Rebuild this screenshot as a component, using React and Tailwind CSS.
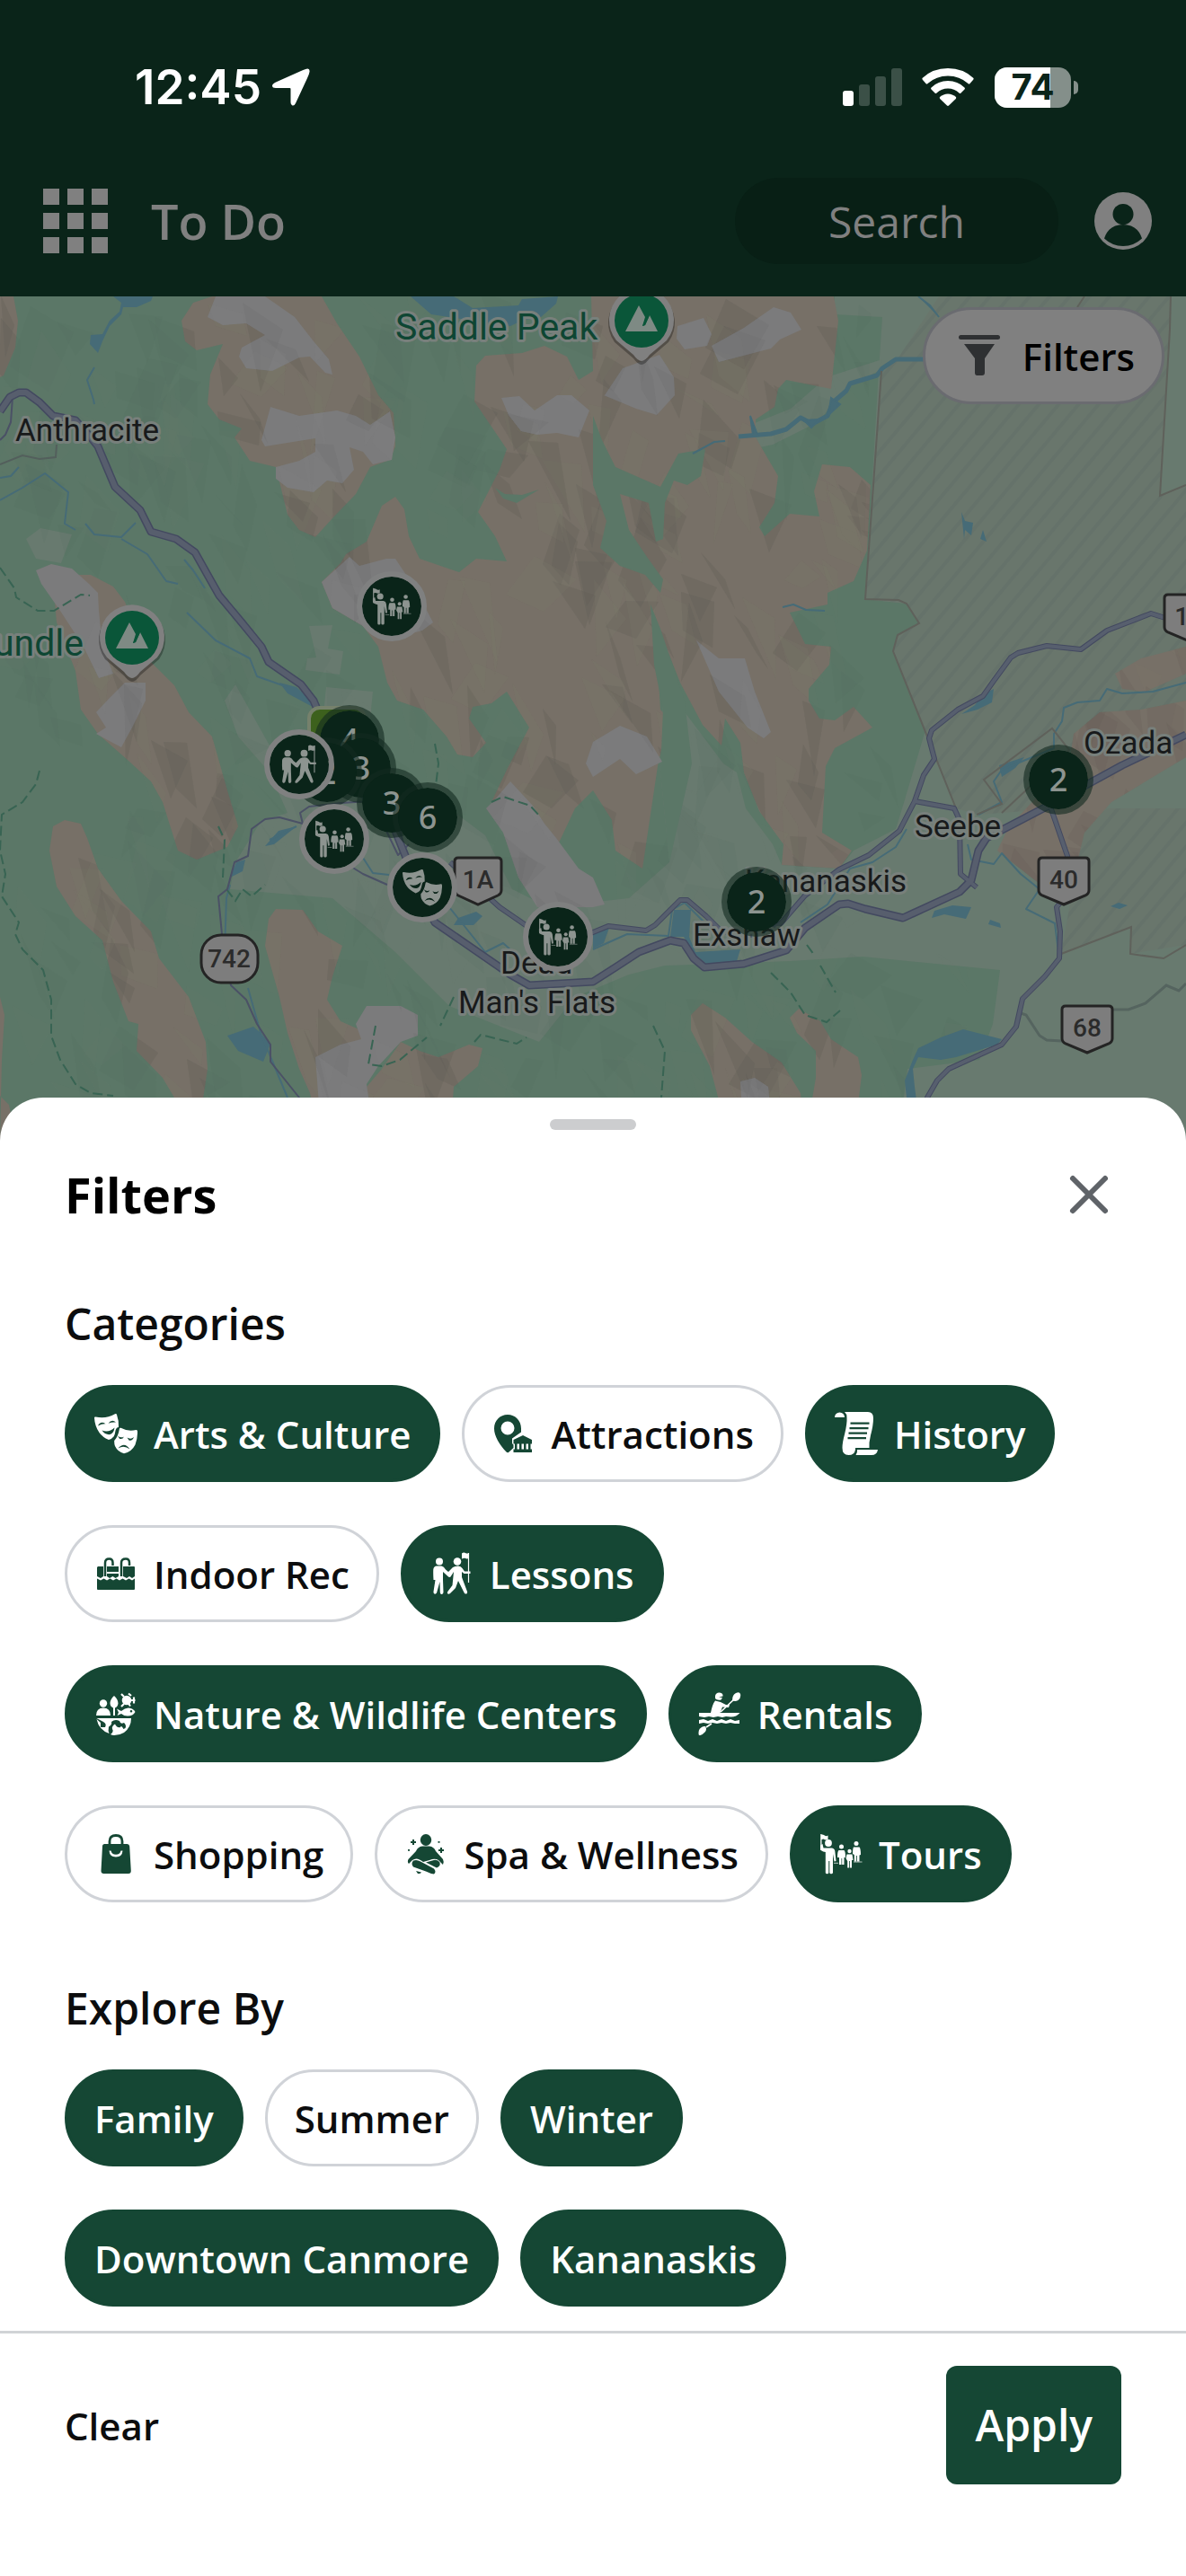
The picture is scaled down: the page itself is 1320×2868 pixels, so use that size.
import { useState } from 'react'
import { X } from 'lucide-react'

/* ---------- category icons, all on a 48 x 48 box ---------- */

function Svg({ children, className = 'w-12 h-12', ...rest }) {
  return (
    <svg viewBox="0 0 48 48" fill="currentColor" aria-hidden="true" className={className + ' shrink-0'} {...rest}>
      {children}
    </svg>
  )
}

function MasksIcon(props) {
  return (
    <Svg {...props}>
      <path
        fillRule="evenodd"
        d="M0 6.5Q0 5.2 1.5 5.5Q13 8 23 2.3Q24.6 1.6 25 3Q27.5 10 27 17Q24.5 17 23.6 20.5Q23 25 21.5 27.5Q19 30.5 16 31Q9 28 5.5 23Q.5 16 0 6.5ZM4 15.500Q7 9.500 12.500 13.300Q8.500 13 4 15.500ZM15.500 12.800Q19.500 7.500 24 11.500Q19.500 11 15.500 12.800ZM8.500 20.500Q16 23.500 22.500 17.500Q21.500 24.500 16.500 25.200Q11.500 25 8.500 20.500Z"
      />
      <path
        fillRule="evenodd"
        d="M28 18.500Q28.300 17.300 29.500 17.800Q37 22 46.500 20Q48 19.800 48 21.500Q48.200 30 45.500 36.500Q41.500 44.500 33 46.300Q26 44.500 23 38Q22 35 22.200 32Q26.500 27.500 28 18.500ZM26 26.500Q29.500 29.600 33 27.500Q31.500 31 28 29.800ZM36.500 28.500Q40.500 31 44 28Q42.500 32.500 38.500 31.500ZM26.500 40.500Q33.500 32.500 39.500 41.500Q33 36.500 26.500 40.500Z"
      />
    </Svg>
  )
}

function AttractionsIcon(props) {
  return (
    <Svg {...props}>
      <path
        fillRule="evenodd"
        d="M18 3C26.500 3 33 9.500 33 18.500V22.500L23 29.500V35L24.500 36.500V40L19 45Q17.800 45.600 16.500 44.500C9 36.500 3 27 3 18.500C3 9.500 9.500 3 18 3ZM18 10.500A7.500 7.500 0 1 0 18 25.500A7.500 7.500 0 1 0 18 10.500Z"
      />
      <path d="M35 26L45 31V35.500H43.500V41.500H45V45H24.500V41.500H26V35.500H24.500V31ZM28.500 35.500V41.500H31V35.500ZM33.500 35.500V41.500H36V35.500ZM38.500 35.500V41.500H41V35.500Z" fillRule="evenodd" />
    </Svg>
  )
}

function ScrollIcon(props) {
  return (
    <Svg {...props}>
      <path d="M0 6A5.500 5.500 0 0 1 11 6Z" />
      <path
        fillRule="evenodd"
        d="M11 0H37Q43 0 43 7Q43 15 40 26Q38 34 38.500 40H23V42Q22 48 15.500 48Q8.500 48 8.500 40Q8.500 34 11 25Q14 13 13.500 6Q13.500 2 11 0ZM17.500 11.500V13.800H38.500V11.500ZM16.500 17V19.300H37.500V17ZM15.500 22.500V24.800H36V22.500ZM14.500 28V30.300H35V28Z"
      />
      <path d="M25 42H48Q47 48 41 48H23.500Q25.500 45 25 42Z" />
    </Svg>
  )
}

function PoolIcon(props) {
  return (
    <Svg {...props}>
      <path d="M4 16H10V27L7 29L3 27V17ZM14 24H27V27L23.500 29L20.500 27L17 29L14 27ZM14 16H27V22H14ZM32 16H44Q45 16 45 17V27L42 29L39 27L36 29L32 27Z" />
      <path d="M3 29.500L7 31.500L10.500 29.500L14 31.500L17.500 29.500L21 31.500L24.500 29.500L28 31.500L31.500 29.500L35 31.500L38.500 29.500L42 31.500L45 29.500V41Q45 42 44 42H4Q3 42 3 41Z" />
      <path d="M12 27V12Q12 7.500 16.500 7.500Q20.500 7.500 20.500 12V15M30 27V12Q30 7.500 35 7.500Q39 7.500 39 12V15" fill="none" stroke="currentColor" strokeWidth="2.500" />
    </Svg>
  )
}

function LessonsIcon(props) {
  return (
    <Svg {...props}>
      <circle cx="10" cy="10.500" r="4" />
      <circle cx="30" cy="10.500" r="4.300" />
      <path d="M35 1.500Q37 0 39 1Q41 2 43 1V7Q40.500 8 38.500 6.800Q37 6.500 35 7.500Z" />
      <path d="M42.500 1V34" stroke="currentColor" strokeWidth="1.200" />
      <path d="M7 15.500H12.500Q15 16 17 19.500L20 22L25 17Q27 15.500 31 15.500Q34 15.500 35.500 18L38 21.500H44.500V24H37.500L35 22V28L41 44Q41.500 46.500 39.500 46.500Q38 46.500 37.500 45L31 32L28 40L22 46Q20 47.500 19 46Q18.500 44.500 20 43L24.500 37L26 22L22.500 27.500Q21 28.500 19.500 27L14 22V31L14.500 45Q14 47 12.500 47Q11 47 10.800 45L10.500 33L7 45.500Q6 47 4.500 46.500Q3.300 46 3.500 44L5.500 31H3.500Q3 24 3.300 19Q4 15.700 7 15.500Z" />
    </Svg>
  )
}

function NatureIcon(props) {
  return (
    <Svg {...props}>
      <circle cx="10" cy="12.500" r="4.200" />
      <path d="M2 26Q2 17.500 10 17.500Q18 17.500 18 26Z" />
      <path d="M22 4Q26.500 8 26.500 12.500Q26 16.500 23 17.500V26H21V17.500Q17.500 16 17.500 12Q18 7.500 22 4Z" />
      <circle cx="36" cy="9" r="5.300" />
      <path d="M30 2L33 5M38 1.500L41 4M40 9H45.500M30 16L33 13M40 15.500L38 12.500M44 5.500V12.500" stroke="currentColor" strokeWidth="2.200" />
      <path fillRule="evenodd" d="M25 18.500L30 21Q36 15.500 42 18.500Q45 20 45.500 22Q43 26.500 37 26.500Q33 26.500 30 24L25.500 26L27 22.500ZM41 20A1.300 1.300 0 1 0 41 22.600A1.300 1.300 0 1 0 41 20Z" />
      <path d="M2.500 29H41Q41 39 33 45Q28 48 22 48Q20 48 18 47Q22 44 20 41Q19 38 23 35.500Q25 40 29 39Q30 36 32.500 41L34.500 40Q36 37 33 34Q29 36 28 32Q23 29.500 19 33Q20 36 16 38.500Q15 43 16.500 46Q5 42 2.500 30L7 34V39L12 39Q14 35 10 33Z" />
    </Svg>
  )
}

function KayakIcon(props) {
  return (
    <Svg {...props}>
      <path d="M19 4Q20 0 24 .5Q28 1 27.500 4.500L23 5.500L27 6L25.500 8.500Q21 9.500 19 7Z" />
      <path d="M38 9Q38 3 42 1Q46 -1 47 2Q48 6 44.500 9Q41 11 38 9Z" />
      <path d="M40 8L25 22M15 35L9 39" stroke="currentColor" strokeWidth="1.700" />
      <path d="M19 9.500L25 11L31 14H35L34 17L27 16.500L24.500 23H14Q16 13 19 9.500Z" />
      <path d="M1 23H46.500Q42 28 36 27.500L31 27L27 28L22 27L17 28L12 27L7 28L1 27Z" />
      <path d="M1 31L6 30L11 32L16 30L21 32L26 30L31 32L36 30L41 32L46 31V35L41 35L36 34L31 35L26 34L21 35L16 34L11 35L6 34L1 35Z" />
      <path d="M1 42Q4 37.500 8 38Q10 41 8 44Q4 48.500 1 48Q0 46 1 42Z" />
    </Svg>
  )
}

function BagIcon(props) {
  return (
    <Svg {...props}>
      <path d="M17 14V10Q17 3.500 24 3.500Q31 3.500 31 10V14" fill="none" stroke="currentColor" strokeWidth="2.800" />
      <path
        fillRule="evenodd"
        d="M11.500 13H36.500Q39 13 39.200 15.500L40.800 43Q40.800 46 38 46H10.500Q7.500 46 7.500 43L9 15.500Q9 13 11.500 13ZM16.500 20.500Q17 27.500 24 27.500Q31 27.500 31.500 20.500H29.500Q28.500 24.800 24 24.800Q19.500 24.800 18.500 20.500Z"
      />
    </Svg>
  )
}

function SpaIcon(props) {
  return (
    <Svg {...props}>
      <ellipse cx="24" cy="8.500" rx="6.200" ry="6.500" />
      <path d="M20 15.500H28Q33 16 35 21L43 30Q44.500 33 43 36L38 31Q34 28.500 28 31L21 33Q14 27 9 31L5 35Q3 33 4.500 30L13 21Q15 16 20 15.500Z" />
      <path d="M10 31.500Q14 30 18 32.500L33 40.500Q36 44 33 46.500Q29 46 24 43.500L10 38.500Q7 35 10 31.500Z" />
      <path d="M24 33.500L31 31.500Q37 29.500 39.500 33.500Q40.500 38 36 39.500ZM13 43L19 44.500Q18 46.500 15 46Z" />
      <path d="M10 8V14M7 11H13M41 17V23M38 20H44M38.500 10V11.800M5 19V20.800" stroke="currentColor" strokeWidth="2" />
    </Svg>
  )
}

function ToursIcon(props) {
  return (
    <Svg {...props}>
      <path d="M1.500 2L5 3Q7 5 9.500 3.500V8Q7 9 4.500 7.500L2.500 8V20H1.200V2Z" />
      <circle cx="10" cy="12" r="3.900" />
      <path d="M1 14.500L3.500 13L4.500 17.500H14Q17 18 17.300 21L18.500 32L16.500 32.500L15 24V45Q14.500 46.500 13 46.300Q11.500 46.300 11.300 45V32H10.300V45Q10 46.500 8.500 46.300Q7 46.300 6.800 45V22Q1 21 1 18Z" />
      <circle cx="24.500" cy="16" r="2.500" />
      <path d="M21.500 20H27.500Q29 21 29 28H27.500V36H25.200V29H24.500V36H22V28L20 28Q20 21 21.500 20Z" />
      <circle cx="33.500" cy="21" r="2.200" />
      <path d="M30.500 24.500H36.500L37.500 31H36V39.500H34V32H33.200V39.500H31.200V32L29.500 29Z" />
      <circle cx="41" cy="12.500" r="2.500" />
      <path d="M38 16.500H44.500Q46 18 46 25L44.500 25.500V32.500H42V26H41.200V32.500H38.800V25L37 24Q37 18 38 16.500Z" />
      <path d="M16 34.300H21M38 33H47.500" stroke="currentColor" strokeWidth=".7" />
    </Svg>
  )
}

/* ---------- map drawing ---------- */

const TAN = [
  '0,330 15,330 20,357 17,387 4,418 0,420',
  '236,330 358,330 375,360 400,397 421,440 438,460 440,497 434,512 412,520 396,550 370,577 351,598 333,590 320,573 307,520 278,513 261,487 269,477 244,467 231,450 234,417 248,383 219,390 206,380 202,357 215,337',
  '530,407 540,396 581,393 606,385 631,397 644,423 660,413 658,330 928,330 933,357 925,433 875,423 866,433 862,453 841,467 841,487 866,530 862,560 845,587 851,597 879,572 912,575 906,547 915,517 946,520 969,540 965,613 950,647 921,660 921,673 879,682 896,717 925,720 923,740 900,767 900,780 912,800 929,802 950,787 971,810 929,833 919,853 915,927 948,947 934,967 870,963 872,940 845,903 828,860 824,827 807,800 803,830 782,807 757,760 744,727 732,740 735,790 744,800 732,853 725,900 715,967 685,947 681,913 660,880 640,900 600,985 568,947 547,893 564,857 589,810 564,770 547,783 526,787 522,800 541,827 526,843 509,840 497,820 471,790 442,780 431,760 421,720 404,697 370,677 358,648 379,627 385,617 408,603 425,563 440,553 450,567 455,597 467,622 511,637 530,622 564,625 551,597 532,570 556,523 564,500 528,447',
  '61,670 84,640 101,640 126,653 139,670 168,737 194,763 210,793 236,820 253,880 265,920 253,943 219,957 198,947 181,893 168,870 143,847 109,817 90,790 84,747 63,693',
  '72,913 90,917 97,933 109,967 135,1003 168,1037 177,1067 210,1110 229,1160 231,1190 219,1270 194,1222 181,1200 152,1170 154,1140 143,1137 126,1093 114,1047 84,1020 63,987 55,947 59,920',
  '307,1012 337,1013 354,1037 381,1053 370,1087 364,1113 379,1137 402,1147 402,1157 370,1175 358,1270 345,1217 333,1190 320,1150 311,1110 295,1053 299,1023',
  '446,1160 467,1170 488,1177 522,1163 537,1167 532,1187 505,1210 501,1270 417,1270 408,1210 425,1190',
  '782,1117 807,1133 837,1160 870,1183 891,1217 896,1270 812,1270 790,1187 769,1147 769,1130',
  '889,1123 913,1137 925,1157 955,1177 959,1197 950,1270 896,1270 908,1200 908,1170 887,1150 879,1133',
  '1320,780 1270,790 1224,793 1195,817 1190,850 1123,920 1110,947 1148,977 1165,990 1199,960 1207,927 1237,893 1320,843',
  '1241,750 1270,733 1320,720 1320,750 1275,770 1249,767',
  '0,1110 5,1130 2,1180 0,1270 18,1270 10,1230 0,1220',
]

const SNOW = [
  '240,330 295,330 328,353 349,380 366,400 370,417 362,415 345,397 333,398 303,413 274,410 266,397 269,387 295,373 274,360 248,362 231,353',
  '301,453 333,463 375,457 396,463 412,473 434,458 440,487 436,512 415,517 404,503 389,498 394,523 381,538 364,535 349,548 320,543 307,533 307,520 333,513 351,503 351,488 295,497 291,490',
  '558,443 578,441 595,457 620,440 636,440 656,457 644,487 620,482 598,484 580,480 566,462',
  '358,648 389,620 400,630 430,622 440,622 452,640 470,670 482,693 470,702 440,710 404,697 370,677',
  '40,635 57,628 80,633 99,650 109,660 110,680 114,720 126,750 110,755 93,720 67,680 46,650',
  '139,760 162,760 162,780 147,810 135,832 118,823 107,817 118,810 107,793 122,777',
  '408,1120 446,1120 465,1130 465,1153 446,1160 421,1187 408,1207 417,1270 358,1270 351,1177 379,1163 402,1157 396,1140',
  '568,870 593,897 606,917 619,933 644,967 660,977 673,1007 660,1010 598,1010 577,977 560,927 541,900 551,890',
  '754,363 783,354 792,372 787,385 762,389 753,377',
  '792,385 828,365 861,342 880,348 892,367 868,378 858,388 800,403',
  '673,440 693,410 734,395 750,420 751,440 731,462 708,455 672,440',
  '775,713 800,733 829,733 840,770 858,815 850,822 832,810 800,770',
  '660,826 690,808 720,820 737,848 708,862 690,845 660,865 652,850',
  '824,1204 840,1200 855,1210 858,1240 826,1240',
]

// darker forest showing through the massif
const FOREST = [
  '660,463 670,490 685,520 735,542 755,505 785,500 780,530 765,540 750,535 740,560 738,600 730,603 722,560 690,550 700,590 720,620 738,645 735,660 718,640 690,630 668,610 675,580 660,540',
  '724,673 735,700 762,780 770,850 745,960 735,860 738,790 728,740',
  '551,543 562,550 581,551 600,545 575,560 560,555',
]

const PALE = [
  '929,330 1320,330 1320,1270 1000,1270 1010,1190 1090,1180 1105,1140 1113,1080 960,1065 880,1070 740,1075 700,1085 640,1110 600,1160 500,1120 440,1060 370,1000 256,990 262,960 290,915 320,905 300,860 265,820 250,780 262,762 300,830 350,840 400,820 440,860 500,900 540,930 570,990 610,1010 700,1000 745,960 735,860 738,780 760,790 775,810 805,850 820,860 830,900 860,940 870,963 934,967 950,947 997,923 1005,897 1030,813 1016,780 994,725 1000,707 1023,694 1009,672 963,667 978,413 982,353 929,350',
  '978,413 945,430 910,470 860,495 780,512 752,523 760,500 830,475 880,455 920,420 982,400',
  '29,600 45,588 80,595 68,627 40,622',
  '344,697 370,696 365,722 382,725 378,751 340,746 342,733 352,732',
  '363,765 415,770 412,800 360,795',
]

const WATER = [
  '126,330 170,330 168,335 152,342 137,342 135,350 122,363 114,380 109,393 100,383 101,373 114,372 122,357 133,347 135,337',
  '457,330 505,330 526,343 577,340 581,333 621,330 619,338 602,353 581,357 568,363 480,350',
  '253,1153 282,1143 290,1150 301,1162 293,1182 265,1170',
  '263,960 273,957 270,970 256,977',
  '295,942 310,925 330,920 305,940',
  '750,1013 769,1013 767,1043 774,1060 824,1057 820,1070 786,1073 771,1060 761,1043 746,1043',
  '660,1040 678,1033 672,1050 660,1056',
  '1022,1167 1047,1155 1072,1146 1115,1157 1110,1163 1064,1177 1047,1180 1022,1177 1016,1190 1018,1210 1026,1270 1014,1270 1007,1203 1016,1180',
  '1060,1008 1081,1010 1075,1023 1051,1018 1037,1022 1040,1014',
  '1102,1024 1113,1028 1114,1033 1100,1029',
  '1070,570 1074,580 1083,582 1081,596 1074,590 1073,600',
  '1094,590 1098,603 1091,600',
  '1094,773 1106,767 1104,782 1088,790 1070,795 1085,785',
  '1112,852 1140,843 1130,855 1115,865',
  '1236,1009 1245,1005 1255,1008 1246,1012',
  '311,760 330,765 343,777 348,787 320,772',
  '510,1022 530,1015 537,1020 527,1030 505,1030',
]

const STREAMS = [
  '105,409 97,423 104,445 105,450',
  '0,557 25,543 50,527 76,548 72,583 84,590',
  '0,532 12,530 21,520',
  '95,583 105,595 135,598 151,582',
  '135,600 164,617 185,647 198,650',
  '205,623 215,635 228,655',
  '208,682 240,713 278,733 286,753 320,765',
  '771,505 795,492 807,491',
  '1320,760 1283,770 1249,772 1232,767 1224,780 1199,782 1184,788 1182,803 1173,817 1173,833 1115,857 1106,870 1115,893 1089,907',
  '1009,923 997,943 971,960 946,967 921,1007 891,1027',
  '660,1057 698,1040 744,1042 748,1013 762,1005 790,1033',
  '1077,940 1081,957 1106,962 1115,950 1136,973 1157,990 1142,1012 1174,1028 1178,1060',
  '330,920 300,935',
  '250,1060 252,1000 256,985',
  '276,1100 290,1150 320,1222',
  '404,955 415,972 433,974',
  '500,1010 520,1035 540,1060 560,1050 580,1068',
  '871,676 883,673 897,679 918,680',
]

const HIGHWAY =
  '0,458 11,442 21,437 29,437 44,448 59,463 84,468 101,487 109,497 128,542 156,568 168,592 196,600 217,615 231,640 244,663 269,693 291,720 299,737 335,762 349,780 370,830 400,880 438,920 450,950 470,1000 484,1027 568,1085 589,1097 660,1093 685,1077 711,1060 746,1047 761,1050 772,1067 784,1077 828,1073 875,1058 896,1033 934,1007 944,1006 963,1012 1005,1022 1068,993 1081,980 1089,947 1098,933 1165,898 1249,852 1320,818'

const ROADS = [
  '501,960 556,1010 585,1030 622,1048 660,1038 677,1031 719,1036 729,1030 757,1002 765,1002 786,1020 803,1037 850,1042 870,1027 896,997 934,968 967,952 1001,925 1018,892 1028,863 1040,845 1034,822 1037,813 1066,790 1094,775 1106,758 1125,732 1133,727 1165,719 1203,723 1232,702 1281,683 1300,689',
  '1018,892 1062,900 1068,913 1069,973 1087,988',
  '1169,898 1188,953 1184,1000 1176,1010 1180,1037 1179,1067 1163,1087 1138,1112 1131,1143 1115,1163 1056,1190 1043,1203 1032,1222 1026,1270',
]

const LANES = [
  '431,985 404,973 391,965 372,940 337,917 311,910 295,912 280,923 276,953 261,960 253,990 243,998 247,1040 257,1097 274,1113 286,1140 301,1163 301,1182 333,1222 350,1270',
  '430,925 443,952 455,940',
  '14,442 12,470 6,484 0,490',
  '337,917 334,905 344,898 380,894 440,890 446,925 452,958',
]

const BORDERS = [
  '981,413 963,667 1000,668 1009,672 1023,694 999,707 994,725 1064,900',
  '1303,330 1302,367 1291,552 1320,540',
  '1087,907 1115,895 1095,868 1171,811 1190,835 1115,905',
  '1207,330 1199,342',
  '1181,1062 1259,1032 1258,1062 1295,1067 1320,1052',
]

const TRAILS = [
  '44,858 40,873 25,893 2,907 0,947 6,973 2,998 21,1027 17,1040 25,1057 48,1080 57,1113 57,1153 67,1180 84,1207 101,1217 126,1220',
  '0,632 16,655 18,665 42,680 60,680 90,662 100,663',
  '243,920 250,935 248,977',
  '252,990 262,1003 270,990 280,998 295,985',
  '484,828 488,850 485,875',
  '547,893 560,887 590,897 602,910',
  '858,1083 880,1105 896,1130 920,1138 935,1125',
  '898,1052 906,1063 M913,1075 930,1105',
  '727,1142 740,1170 736,1222',
  '418,1142 410,1185 425,1187 445,1180 475,1155',
  '505,1110 490,1142',
  '528,1160 535,1152 575,1162 586,1155',
]

// low-contrast facets that give the terrain its relief
function buildFacets() {
  let seed = 11
  const rnd = () => {
    seed = (seed * 16807) % 2147483647
    return seed / 2147483647
  }
  return Array.from({ length: 620 }, () => {
    const x = rnd() * 1320
    const y = 310 + rnd() * 930
    const w = 14 + rnd() * 34
    const h = 30 + rnd() * 70
    const lean = (rnd() - 0.35) * 50
    const shape = [
      [x, y],
      [x + w, y + h * rnd() * 0.6],
      [x + w * 0.5 + lean, y + h],
    ]
    if (rnd() > 0.5) shape.push([x - w * 0.4 + lean, y + h * 0.7])
    return {
      points: shape.map((p) => p.map(Math.round).join(',')).join(' '),
      dark: rnd() > 0.45,
    }
  })
}

const FACETS = buildFacets()

const LABELS = [
  { text: 'Saddle Peak', x: 440, y: 378, size: 41, fill: '#0e4633' },
  { text: 'undle', x: -7, y: 730, size: 41, fill: '#0e4633' },
  { text: 'Anthracite', x: 17, y: 491, size: 35 },
  { text: 'Dead', x: 557, y: 1084, size: 35 },
  { text: "Man's Flats", x: 510, y: 1128, size: 35 },
  { text: 'Kananaskis', x: 829, y: 993, size: 35 },
  { text: 'Exshaw', x: 771, y: 1053, size: 35 },
  { text: 'Seebe', x: 1018, y: 932, size: 35 },
  { text: 'Ozada', x: 1206, y: 839, size: 35 },
]

const SHIELDS = [
  { text: '1A', x: 505, y: 954, w: 54 },
  { text: '40', x: 1155, y: 954, w: 58 },
  { text: '68', x: 1181, y: 1119, w: 58 },
  { text: '1X', x: 1295, y: 661, w: 58 },
]

function PeakPin({ x, y }) {
  return (
    <g transform={`translate(${x} ${y})`}>
      <path d="M0 49Q-4 49 -9 42L-30 24A37 37 0 1 1 30 24L9 42Q4 49 0 49Z" fill="#000" opacity=".3" />
      <path d="M0 45Q-4 45 -9 38L-28 22A36 36 0 1 1 28 22L9 38Q4 45 0 45Z" fill="#808080" />
      <circle r="30" fill="#0a5639" />
      <path d="M-18 12L-3 -17L4 -4L1 6L4 5L9 -6L18 12Z" fill="#7e8a84" />
      <path d="M5 -3L1 6L4 5L9 -6" fill="#0a5639" />
    </g>
  )
}

function TerrainMap() {
  return (
    <svg
      viewBox="0 330 1320 940"
      preserveAspectRatio="xMidYMin slice"
      className="w-full h-full block"
      fontFamily='Roboto, "Liberation Sans", sans-serif'
      role="img"
      aria-label="Map of Canmore and Kananaskis"
    >
      <defs>
        <pattern id="hatch" width="17" height="17" patternUnits="userSpaceOnUse" patternTransform="rotate(40)">
          <rect width="17" height="17" fill="#69766c" />
          <rect width="4" height="17" fill="#65726a" />
        </pattern>
        <clipPath id="tanClip">
          {TAN.map((p) => <polygon key={p} points={p} />)}
        </clipPath>
        <clipPath id="snowClip">
          {SNOW.map((p) => <polygon key={p} points={p} />)}
        </clipPath>
        <clipPath id="westClip">
          <polygon points="0,330 970,330 960,670 1000,900 880,980 1080,1080 1080,1140 960,1270 0,1270" />
        </clipPath>
      </defs>

      <rect y="330" width="1320" height="940" fill="#5b7767" />
      {PALE.map((p) => <polygon key={p} points={p} fill="#687a6f" />)}
      <polygon
        points="981,413 1000,398 1045,330 1303,330 1302,367 1291,552 1320,540 1320,843 1237,893 1207,927 1199,960 1181,1062 1259,1032 1258,1062 1320,1052 1320,900 1180,900 1089,907 1064,900 994,725 999,707 1023,694 1009,672 963,667"
        fill="url(#hatch)"
      />
      {TAN.map((p) => <polygon key={p} points={p} fill="#777067" />)}

      <g clipPath="url(#westClip)">
        {FACETS.map((f, i) => (
          <polygon key={i} points={f.points} fill={f.dark ? '#4a6657' : '#74806f'} opacity=".08" />
        ))}
      </g>
      <g clipPath="url(#tanClip)">
        {FACETS.map((f, i) => (
          <polygon key={i} points={f.points} fill={f.dark ? '#625b54' : '#7d776b'} opacity=".2" />
        ))}
      </g>
      {FOREST.map((p) => <polygon key={p} points={p} fill="#5b7767" />)}
      {SNOW.map((p) => <polygon key={p} points={p} fill="#7b7b7c" />)}
      <g clipPath="url(#snowClip)">
        {FACETS.map((f, i) => (
          <polygon key={i} points={f.points} fill={f.dark ? '#68686a' : '#828283'} opacity=".2" />
        ))}
      </g>

      {WATER.map((p) => <polygon key={p} points={p} fill="#466b77" />)}
      {STREAMS.map((p) => (
        <polyline key={p} points={p} fill="none" stroke="#466b77" strokeWidth="2" strokeLinejoin="round" />
      ))}
      <polyline
        points="822,486 858,483 875,478 891,465 904,472 921,463 927,448 942,435 946,427 976,418 982,410 997,400 1030,400"
        fill="none" stroke="#466b77" strokeWidth="5" strokeLinejoin="round"
      />
      <path d="M895 468L912 467L903 476ZM925 443L935 450L922 462ZM835 463L843 484L838 484ZM1022 330L1035 340L1045 353" fill="#466b77" stroke="#466b77" strokeWidth="2" />

      {BORDERS.map((p) => (
        <polyline key={p} points={p} fill="none" stroke="#5f615b" strokeWidth="2" />
      ))}
      {TRAILS.map((p) => (
        <path key={p} d={'M' + p} fill="none" stroke="#386453" strokeWidth="2" strokeDasharray="11 5" />
      ))}
      <polyline points="0,517 25,507 44,511 62,509 63,495" fill="none" stroke="#535f5c" strokeWidth="2" />
      <path d="M1136 1128L1142 1130L1157 1153L1165 1158L1182 1159M1239 1124L1256 1124L1275 1117L1298 1097L1312 1103L1320 1095" fill="none" stroke="#55645f" strokeWidth="3" />

      {LANES.map((p) => (
        <polyline key={p} points={p} fill="none" stroke="#4b5166" strokeWidth="2" strokeLinejoin="round" />
      ))}
      {ROADS.map((p) => (
        <polyline key={p} points={p} fill="none" stroke="#434960" strokeWidth="6" strokeLinejoin="round" />
      ))}
      <polyline points={HIGHWAY} fill="none" stroke="#434960" strokeWidth="9" strokeLinejoin="round" />
      {ROADS.map((p) => (
        <polyline key={p} points={p} fill="none" stroke="#575f6e" strokeWidth="4" strokeLinejoin="round" />
      ))}
      <polyline points={HIGHWAY} fill="none" stroke="#575e6d" strokeWidth="6" strokeLinejoin="round" />

      {SHIELDS.map((s) => (
        <g key={s.text} transform={`translate(${s.x} ${s.y})`}>
          <path
            d={`M5 1H${s.w - 5}Q${s.w - 1} 1 ${s.w - 1} 5V37Q${s.w - 1} 41 ${s.w - 5} 43L${s.w / 2} 53L5 43Q1 41 1 37V5Q1 1 5 1Z`}
            fill="#7d7d7d" stroke="#242424" strokeWidth="3"
          />
          <text x={s.w / 2} y="35" textAnchor="middle" fontSize="28" fontWeight="500" fill="#2b2b2b">{s.text}</text>
        </g>
      ))}
      <rect x="224" y="1041" width="63" height="53" rx="22" fill="#7d7d7d" stroke="#242424" strokeWidth="3" />
      <text x="255" y="1077" textAnchor="middle" fontSize="28" fontWeight="500" fill="#2b2b2b">742</text>

      <rect x="344" y="788" width="62" height="60" rx="12" fill="#3d611d" stroke="#76816c" strokeWidth="4" />

      {LABELS.map((l) => (
        <text
          key={l.text} x={l.x} y={l.y} fontSize={l.size} fill={l.fill ?? '#181a1b'}
          stroke="#78807c" strokeWidth="6" strokeLinejoin="round" paintOrder="stroke"
        >
          {l.text}
        </text>
      ))}
      <PeakPin x={147} y={710} />
      <PeakPin x={714} y={357} />
    </svg>
  )
}

/* ---------- pins: x / y are the centre, measured from the map's corner ---------- */

const PINS = [
  { x: 389, y: 494, count: 4 },
  { x: 402, y: 525, count: 3 },
  { x: 364, y: 530, count: 2 },
  { x: 436, y: 564, count: 3 },
  { x: 476, y: 580, count: 6 },
  { x: 842, y: 674, count: 2 },
  { x: 1178, y: 538, count: 2 },
  { x: 333, y: 521, label: 'Lessons', icon: LessonsIcon },
  { x: 372, y: 604, label: 'Tours', icon: ToursIcon },
  { x: 470, y: 658, label: 'Arts & Culture', icon: MasksIcon },
  { x: 621, y: 713, label: 'Tours', icon: ToursIcon },
  { x: 436, y: 345, label: 'Tours', icon: ToursIcon },
]

function Pin({ x, y, count, label, icon: Icon }) {
  const base = 'absolute w-[78px] h-[78px] -translate-x-1/2 -translate-y-1/2 rounded-full border-[6px] bg-[#0a2419] bg-clip-padding flex items-center justify-center text-[#8d9490]'
  return (
    <button
      aria-label={label}
      className={base + (Icon ? ' border-[#7f8080]' : ' border-[#122a1f]/60')}
      style={{ left: x, top: y }}
    >
      {Icon ? <Icon className="w-11 h-11" /> : <span className='font-["Noto_Sans"] text-4xl font-medium'>{count}</span>}
    </button>
  )
}

/* ---------- bars ---------- */

function StatusBar() {
  return (
    <div className="flex items-center justify-between h-12 pl-[150px] pr-[120px] text-white">
      <div className="flex items-center gap-3">
        <span className="font-[Inter] text-[53px] leading-[48px] font-semibold">12:45</span>
        <svg viewBox="0 0 42 42" className="w-[42px] h-[42px]" fill="currentColor" aria-hidden="true">
          <path d="M38 .8Q42 -.5 41.500 4Q41 7 39 11L26 39Q24.500 42 22.500 41.500Q20.500 41 20.500 38V23Q20.500 22 19.500 22L4 22Q0 22 0 19.500Q0 17.500 4 15.500L32 3Q35 1.500 38 .8Z" />
        </svg>
      </div>
      <div className="flex items-center">
        <svg viewBox="0 0 66 42" className="w-[66px] h-[42px]" fill="currentColor" aria-hidden="true">
          <rect x="0" y="25" width="12" height="17" rx="3" />
          <g opacity=".2">
            <rect x="18" y="18" width="12" height="24" rx="3" />
            <rect x="36" y="9" width="12" height="33" rx="3" />
            <rect x="54" y="0" width="12" height="42" rx="3" />
          </g>
        </svg>
        <svg viewBox="0 0 58 42" className="w-[58px] h-[42px] ml-[22px]" fill="currentColor" aria-hidden="true">
          <path d="M29 0Q46 0 57.500 11Q58 12 57 13L53.500 17Q52.500 18 51.500 17Q42 8.500 29 8.500Q16 8.500 6.500 17Q5.500 18 4.500 17L1 13Q0 12 .5 11Q12 0 29 0Z" />
          <path d="M29 14Q40 14 47.500 21.500Q48.500 22.500 47.500 23.500L43.500 27.500Q42.500 28.500 41.500 27.500Q36 22.500 29 22.500Q22 22.500 16.500 27.500Q15.500 28.500 14.500 27.500L10.500 23.500Q9.500 22.500 10.500 21.500Q18 14 29 14Z" />
          <path d="M29 28.500Q34 28.500 38 32Q38.500 33 37.800 34L30 41.500Q29 42.300 28 41.500L20.200 34Q19.500 33 20 32Q24 28.500 29 28.500Z" />
        </svg>
        <div className="flex items-center ml-[23px] gap-[3px]">
          <div className="relative w-[85px] h-[45px] rounded-[14px] overflow-hidden bg-[#848f8a] flex items-center justify-center">
            <div className="absolute inset-y-0 left-0 w-[73%] bg-white" />
            <span className="relative font-[Inter] text-[40px] leading-[44px] font-bold text-[#0a2419]">74</span>
          </div>
          <div className="w-[5px] h-[15px] rounded-r-full bg-[#848f8a]" />
        </div>
      </div>
    </div>
  )
}

function AppBar() {
  return (
    <header className="flex items-center pl-12 pr-[38px] text-[#808080]">
      <button aria-label="Menu" className="grid grid-cols-3 gap-[9px]">
        {Array.from({ length: 9 }, (_, i) => <span key={i} className="w-[18px] h-[18px] bg-[#808080]" />)}
      </button>
      <h1 className="ml-12 text-[54px] leading-[72px] font-semibold">To Do</h1>
      <input
        type="text"
        aria-label="Search"
        placeholder="Search"
        className="ml-auto w-[360px] h-24 rounded-full bg-[#081f15] text-center text-5xl placeholder:text-[#808080]"
      />
      <button aria-label="Account" className="ml-10">
        <svg viewBox="0 0 64 64" className="w-16 h-16" aria-hidden="true">
          <circle cx="32" cy="32" r="32" fill="#808080" />
          <circle cx="32" cy="24.500" r="11.500" fill="#0a2419" />
          <path d="M11 51.500Q16 36 32 36Q48 36 53 51.500Q44 60 32 60Q20 60 11 51.500Z" fill="#0a2419" />
        </svg>
      </button>
    </header>
  )
}

/* ---------- filter sheet ---------- */

const CATEGORIES = [
  { name: 'Arts & Culture', icon: MasksIcon },
  { name: 'Attractions', icon: AttractionsIcon },
  { name: 'History', icon: ScrollIcon },
  { name: 'Indoor Rec', icon: PoolIcon },
  { name: 'Lessons', icon: LessonsIcon },
  { name: 'Nature & Wildlife Centers', icon: NatureIcon },
  { name: 'Rentals', icon: KayakIcon },
  { name: 'Shopping', icon: BagIcon },
  { name: 'Spa & Wellness', icon: SpaIcon },
  { name: 'Tours', icon: ToursIcon },
]

const EXPLORE = [
  { name: 'Family' },
  { name: 'Summer' },
  { name: 'Winter' },
  { name: 'Downtown Canmore' },
  { name: 'Kananaskis' },
]

const INITIAL = [
  'Arts & Culture', 'History', 'Lessons', 'Nature & Wildlife Centers', 'Rentals', 'Tours',
  'Family', 'Winter', 'Downtown Canmore', 'Kananaskis',
]

function Chip({ name, icon: Icon, active, onToggle }) {
  return (
    <button
      onClick={() => onToggle(name)}
      aria-pressed={active}
      className={
        'flex items-center gap-[18px] h-[108px] px-[30px] rounded-full border-[3px] text-[42px] font-semibold whitespace-nowrap ' +
        (active ? 'bg-[#154734] border-[#154734] text-white' : 'bg-white border-[#d0d3d8] text-[#0c0d0e]')
      }
    >
      {Icon && <span className={active ? 'text-white' : 'text-[#154734]'}><Icon /></span>}
      {name}
    </button>
  )
}

function ChipGroup({ title, items, selected, onToggle, className }) {
  return (
    <section className={className}>
      <h3 className="text-5xl leading-[72px] font-semibold text-[#0c0d0e]">{title}</h3>
      <div className="mt-8 flex flex-wrap gap-x-6 gap-y-12">
        {items.map((item) => (
          <Chip key={item.name} {...item} active={selected.includes(item.name)} onToggle={onToggle} />
        ))}
      </div>
    </section>
  )
}

export default function App() {
  const [selected, setSelected] = useState(INITIAL)

  const toggle = (name) =>
    setSelected((prev) => (prev.includes(name) ? prev.filter((n) => n !== name) : [...prev, name]))

  return (
    <div className='min-h-screen flex flex-col bg-white font-["Open_Sans","Noto_Sans",sans-serif]'>
      <div className="h-[330px] pt-[73px] flex flex-col gap-[77px] bg-[#0a2419]">
        <StatusBar />
        <AppBar />
      </div>

      <main className="relative h-[940px] overflow-hidden">
        <TerrainMap />
        {PINS.map((pin) => <Pin key={`${pin.x}-${pin.y}`} {...pin} />)}
        <button className="absolute top-3 right-6 flex items-center gap-6 h-[108px] pl-9 pr-[30px] rounded-full border-[3px] border-[#6a6b70] bg-[#808080] text-[42px] font-semibold text-black">
          <svg viewBox="0 0 48 48" className="w-12 h-12" fill="#2e3032" aria-hidden="true">
            <rect x="1" y="1" width="46" height="5" rx="2.500" />
            <path d="M7 11H41L30 27V43Q30 46 27 46H21.500Q19 46 19 43V27Z" />
          </svg>
          Filters
        </button>
      </main>

      <div className="relative -mt-12 flex-1 flex flex-col rounded-t-[48px] bg-white">
        <div className="mt-6 mx-auto w-24 h-3 rounded-full bg-[#cccdcf]" />
        <div className="flex-1 px-[72px] pb-[27px]">
          <div className="mt-9 flex items-center justify-between">
            <h2 className="text-[54px] leading-[72px] font-bold text-black">Filters</h2>
            <button aria-label="Close" className="text-[#5f6368]">
              <X className="w-[72px] h-[72px]" strokeWidth={2} />
            </button>
          </div>
          <ChipGroup title="Categories" items={CATEGORIES} selected={selected} onToggle={toggle} className="mt-[72px]" />
          <ChipGroup title="Explore By" items={EXPLORE} selected={selected} onToggle={toggle} className="mt-[82px]" />
        </div>
        <footer className="flex items-center justify-between border-t-[3px] border-[#d0d3d6] px-[72px] pt-9 pb-[102px]">
          <button onClick={() => setSelected([])} className="text-[42px] font-semibold text-[#0c0d0e]">Clear</button>
          <button className="h-[132px] px-8 rounded-xl bg-[#154734] text-5xl font-semibold text-white">Apply</button>
        </footer>
      </div>
    </div>
  )
}
